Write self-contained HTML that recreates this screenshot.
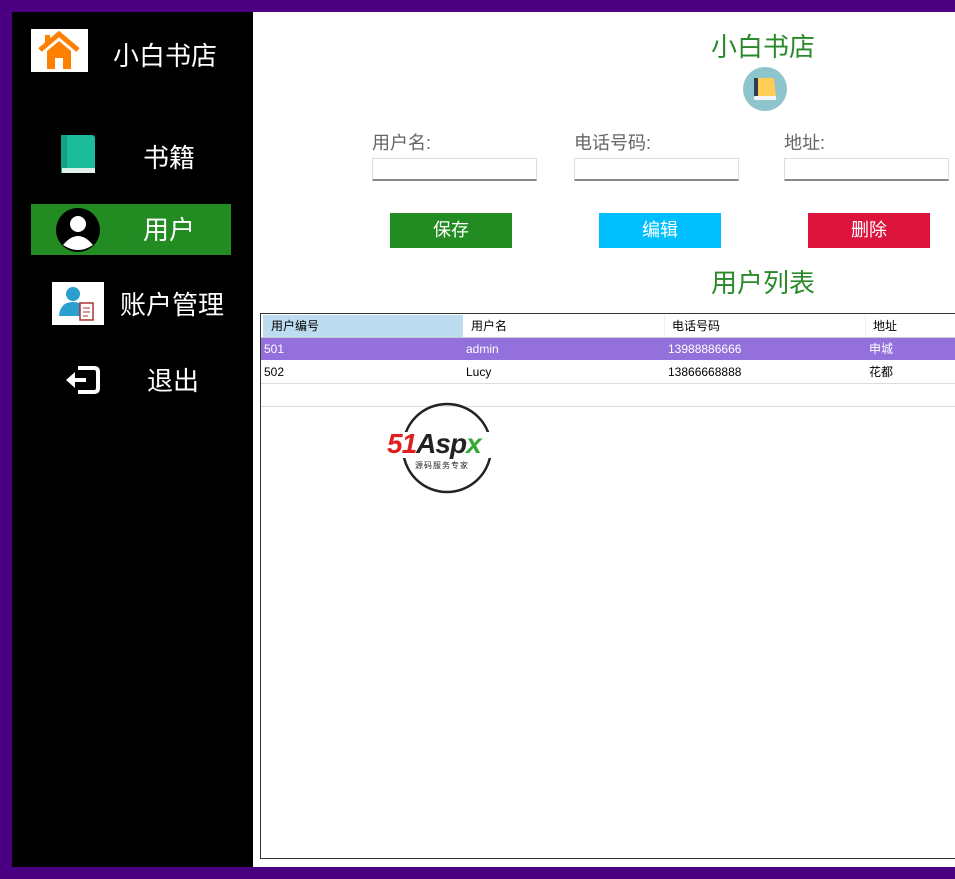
<!DOCTYPE html>
<html><head><meta charset="utf-8"><style>
*{margin:0;padding:0;box-sizing:border-box}
body{width:955px;height:879px;background:#4b0082;position:relative;overflow:hidden;font-family:"Liberation Sans","Noto Sans CJK SC",sans-serif}
.a{position:absolute}
.side{left:12px;top:12px;width:241px;height:855px;background:#000}
.main{left:253px;top:12px;width:702px;height:855px;background:#fff}
.st{color:#fff;font-size:26px;line-height:30px}
.g{color:#2a8a2a;font-size:26px;line-height:30px}
.lbl{color:#666;font-size:18px;line-height:22px}
.inp{height:23px;width:165px;border:1px solid #ddd;border-bottom:2px solid #888;background:#fff}
.btn{width:122px;height:35px;color:#fff;font-size:18px;line-height:35px;text-align:center}
.c{font-size:12px;line-height:22px;position:absolute}
</style></head><body>
<div class="a side"></div>
<div class="a main"></div>
<!-- sidebar -->
<div class="a" style="left:31px;top:29px;width:57px;height:43px;background:#fff"></div>
<svg class="a" style="left:38px;top:31px" width="42" height="40" viewBox="0 0 42 40"><path d="M2 19 L21 3 L40 19" stroke="#ff8000" stroke-width="5" fill="none"/><rect x="7" y="4" width="5" height="9" fill="#ff8000"/><path d="M9 20 L21 10 L33 20 V38 H25 V27 H17 V38 H9Z" fill="#ff8000"/></svg>
<div class="a st" style="left:113px;top:41px">小白书店</div>
<svg class="a" style="left:61px;top:135px" width="35" height="42"><rect x="0" y="0" width="34" height="38" rx="3" fill="#1abc9c"/><rect x="0" y="0" width="6" height="38" fill="#16a085"/><rect x="1" y="33" width="33" height="5" fill="#e0f0ec"/></svg>
<div class="a st" style="left:143px;top:143px">书籍</div>
<div class="a" style="left:31px;top:204px;width:200px;height:51px;background:#228b22"></div>
<svg class="a" style="left:55px;top:207px" width="46" height="46"><circle cx="23" cy="23" r="22" fill="#000"/><circle cx="23" cy="17" r="8" fill="#fff"/><path d="M8 38 Q23 20 38 38 Q23 48 8 38Z" fill="#fff"/></svg>
<div class="a st" style="left:143px;top:215px">用户</div>
<div class="a" style="left:52px;top:282px;width:52px;height:43px;background:#fff"></div>
<svg class="a" style="left:56px;top:284px" width="46" height="40"><circle cx="17" cy="10" r="7" fill="#2a9fd0"/><path d="M3 32 Q4 18 17 18 Q30 18 31 32Z" fill="#2a9fd0"/><rect x="24" y="19" width="13" height="17" fill="#fff" stroke="#a33" stroke-width="1.5"/><path d="M27 24h7M27 28h7M27 32h5" stroke="#a33"/></svg>
<div class="a st" style="left:120px;top:290px">账户管理</div>
<svg class="a" style="left:64px;top:364px" width="38" height="32"><path d="M14 4 H30 Q34 4 34 8 V24 Q34 28 30 28 H14" stroke="#fff" stroke-width="4" fill="none"/><path d="M22 16 H6" stroke="#fff" stroke-width="4"/><path d="M2 16 L11 8 V24Z" fill="#fff"/></svg>
<div class="a st" style="left:147px;top:366px">退出</div>
<!-- content -->
<div class="a g" style="left:711px;top:32px">小白书店</div>
<svg class="a" style="left:743px;top:67px" width="44" height="44"><circle cx="22" cy="22" r="22" fill="#8ec4cc"/><path d="M11 30 V14 Q11 11 14 11 H31 L33 30Z" fill="#ffcc55"/><rect x="11" y="11" width="4" height="20" fill="#2c3e50"/><rect x="11" y="29" width="22" height="4" rx="1" fill="#f5f5f5"/></svg>
<div class="a lbl" style="left:372px;top:132px">用户名:</div>
<div class="a lbl" style="left:574px;top:132px">电话号码:</div>
<div class="a lbl" style="left:784px;top:132px">地址:</div>
<div class="a inp" style="left:372px;top:158px"></div>
<div class="a inp" style="left:574px;top:158px"></div>
<div class="a inp" style="left:784px;top:158px"></div>
<div class="a btn" style="left:390px;top:213px;background:#228b22">保存</div>
<div class="a btn" style="left:599px;top:213px;background:#00bfff">编辑</div>
<div class="a btn" style="left:808px;top:213px;background:#dc143c">删除</div>
<div class="a g" style="left:711px;top:268px">用户列表</div>
<!-- table -->
<div class="a" style="left:260px;top:313px;width:700px;height:546px;border:1px solid #333;background:#fff"></div>
<div class="a" style="left:263px;top:315px;width:200px;height:22px;background:#bedcf0"></div>
<div class="a" style="left:261px;top:337px;width:694px;height:1px;background:#ccc"></div>
<div class="a" style="left:261px;top:338px;width:694px;height:22px;background:#9370db"></div>
<div class="a" style="left:261px;top:383px;width:694px;height:1px;background:#ddd"></div>
<div class="a" style="left:261px;top:406px;width:694px;height:1px;background:#ddd"></div>
<div class="a" style="left:664px;top:315px;width:1px;height:22px;background:#eee"></div>
<div class="a" style="left:865px;top:315px;width:1px;height:22px;background:#eee"></div>
<div class="c" style="left:271px;top:315px">用户编号</div>
<div class="c" style="left:471px;top:315px">用户名</div>
<div class="c" style="left:672px;top:315px">电话号码</div>
<div class="c" style="left:873px;top:315px">地址</div>
<div class="c" style="left:264px;top:338px;color:#fff">501</div>
<div class="c" style="left:466px;top:338px;color:#fff">admin</div>
<div class="c" style="left:668px;top:338px;color:#fff">13988886666</div>
<div class="c" style="left:869px;top:338px;color:#fff">申城</div>
<div class="c" style="left:264px;top:361px">502</div>
<div class="c" style="left:466px;top:361px">Lucy</div>
<div class="c" style="left:668px;top:361px">13866668888</div>
<div class="c" style="left:869px;top:361px">花都</div>
<!-- logo -->
<svg class="a" style="left:400px;top:401px" width="96" height="94"><circle cx="47" cy="47" r="44" stroke="#222" stroke-width="2.5" fill="none"/></svg>
<div class="a" style="left:387px;top:432px;width:125px;height:26px;background:#fff"></div>
<div class="a" style="left:387px;top:428px;font-size:28px;font-weight:bold;font-style:italic;line-height:32px;letter-spacing:-1px"><span style="color:#e02020">51</span><span style="color:#222">Asp</span><span style="color:#3a3">x</span></div>
<div class="a" style="left:415px;top:460px;font-size:8px;color:#222;letter-spacing:1px">源码服务专家</div>
</body></html>
